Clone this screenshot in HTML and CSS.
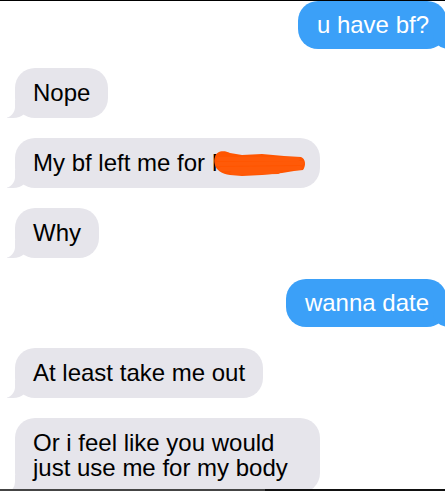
FILE: index.html
```html
<!DOCTYPE html>
<html>
<head>
<meta charset="utf-8">
<link rel="stylesheet" href="styles.css">
</head>
<body>
<div class="screen">
  <div class="chat">
    <div class="msg me first">u have bf?</div>
    <div class="msg them">Nope</div>
    <div class="msg them wide">My bf left me for <span class="redact">M</span>
      <svg class="scribble" width="94" height="27" viewBox="0 0 94 27">
        <path d="M3 7 C4 1, 12 0, 18 3 L30 5 L50 4 L72 6 L89 7 C94 9, 94 16, 91 20 L82 21 L70 23 L50 25 L30 26 L18 25 C10 24, 4 20, 3 15 C2 12, 2 9, 3 7 Z" fill="#ff5500"/>
        <path d="M6 9 L86 9 M5 14 L90 13 M9 19 L88 18 M20 23 L66 22" stroke="#ff5a08" stroke-width="4" stroke-linecap="round" fill="none"/>
      </svg>
    </div>
    <div class="msg them">Why</div>
    <div class="msg me second">wanna date</div>
    <div class="msg them">At least take me out</div>
    <div class="msg them">Or i feel like you would just use me for my body</div>
  </div>
  <div class="bottom-line"></div>
</div>
</body>
</html>
```

FILE: styles.css
```css
html, body {
  margin: 0;
  padding: 0;
  background: #ffffff;
}

.screen {
  width: 445px;
  height: 491px;
  display: flex;
  flex-direction: column;
  overflow: hidden;
}

.chat {
  flex: 1;
  min-height: 0;
  overflow: hidden;
  border-top: 1px solid #000000;
  display: flex;
  flex-direction: column;
  align-items: flex-start;
  gap: 20px;
  padding-left: 15px;
  font-family: "Liberation Sans", Arial, sans-serif;
  font-size: 24px;
  line-height: 25px;
}

.msg {
  position: relative;
  box-sizing: border-box;
  max-width: 305px;
  padding: 12px 18px 13px 18px;
  border-radius: 20px;
  flex: none;
}

.them {
  background: #e6e5eb;
  color: #000000;
}

.them::before {
  content: "";
  position: absolute;
  left: -8px;
  bottom: 0;
  width: 22px;
  height: 18px;
  background: #e6e5eb;
  border-bottom-right-radius: 16px 14px;
}

.them::after {
  content: "";
  position: absolute;
  left: -22px;
  bottom: 0;
  width: 22px;
  height: 20px;
  background: #ffffff;
  border-bottom-right-radius: 11px;
}

.me {
  align-self: flex-end;
  margin-right: -2px;
  background: #3ba0f8;
  color: #ffffff;
  padding: 11px 18px 12px 19px;
}

.me::before {
  content: "";
  position: absolute;
  right: -8px;
  bottom: 0;
  width: 22px;
  height: 18px;
  background: #3ba0f8;
  border-bottom-left-radius: 16px 14px;
}

.me::after {
  content: "";
  position: absolute;
  right: -22px;
  bottom: 0;
  width: 22px;
  height: 20px;
  background: #ffffff;
  border-bottom-left-radius: 11px;
}

.first {
  margin-bottom: -1px;
}

.second {
  margin-top: 1px;
  margin-bottom: 1px;
}

.wide {
  width: 305px;
}

.redact {
  display: inline-block;
  width: 80px;
}

.scribble {
  position: absolute;
  left: 197px;
  top: 12px;
}

.bottom-line {
  flex: none;
  height: 2px;
  background: linear-gradient(to right, #444444 0, #444444 265px, #111111 265px, #111111 100%);
}
```
